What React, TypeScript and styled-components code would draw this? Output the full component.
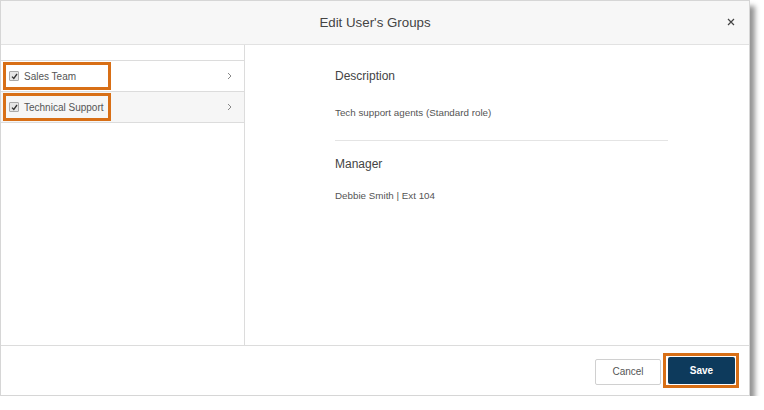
import React from 'react'
import styled, { createGlobalStyle } from 'styled-components'

const GlobalStyle = createGlobalStyle`
    html, body {
        margin: 0;
        padding: 0;
        background: #ffffff;
    }
    body {
        font-family: "Liberation Sans", Arial, sans-serif;
        color: #555;
    }
`

const Dialog = styled.div`
    width: 750px;
    height: 396px;
    box-sizing: border-box;
    border: 1px solid #d6d6d6;
    background: #fff;
    display: flex;
    flex-direction: column;
    box-shadow: 5px 6px 5px rgba(0, 0, 0, 0.42);
`

const Header = styled.div`
    height: 43px;
    flex-shrink: 0;
    background: #f7f7f7;
    border-bottom: 1px solid #e2e2e2;
    display: flex;
    align-items: center;
    justify-content: center;
    position: relative;
`

const Title = styled.div`
    font-size: 13.3px;
    color: #444;
`

const CloseButton = styled.button`
    position: absolute;
    right: 10px;
    top: 13px;
    width: 16px;
    height: 16px;
    background: none;
    border: none;
    padding: 0;
    display: flex;
    align-items: center;
    justify-content: center;
    cursor: pointer;
`

const Body = styled.div`
    flex: 1;
    display: flex;
    min-height: 0;
`

const Sidebar = styled.div`
    width: 243px;
    border-right: 1px solid #dcdcdc;
    padding-top: 15px;
`

const GroupList = styled.div`
    border-top: 1px solid #dcdcdc;
`

const GroupRow = styled.div<{ $shaded?: boolean }>`
    height: 30px;
    border-bottom: 1px solid #dcdcdc;
    background: ${p => (p.$shaded ? '#f6f6f6' : '#fff')};
    display: flex;
    align-items: center;
    padding: 0 12px 0 2px;
`

const Highlight = styled.div`
    width: 108px;
    height: 28px;
    box-sizing: border-box;
    border: 3px solid #d86f16;
    display: flex;
    align-items: center;
    padding: 0 4px 0 3px;
    gap: 5px;
`

const CheckBox = styled.span`
    width: 8px;
    height: 8px;
    border: 1px solid #aaa;
    border-radius: 1px;
    background: #e6e6e6;
    display: flex;
    align-items: center;
    justify-content: center;
`

const GroupName = styled.span`
    font-size: 10px;
    color: #555;
`

const Chevron = styled.span`
    margin-left: auto;
    display: flex;
`

const Details = styled.div`
    flex: 1;
    padding: 24px 0 0 90px;
`

const Heading = styled.div<{ $gap: number }>`
    font-size: 12px;
    line-height: 14px;
    color: #444;
    margin-bottom: ${p => p.$gap}px;
`

const Text = styled.div`
    font-size: 9.8px;
    line-height: 12px;
    color: #555;
`

const Divider = styled.div`
    width: 333px;
    height: 1px;
    background: #e4e4e4;
    margin: 21px 0 16px;
`

const Footer = styled.div`
    height: 49px;
    flex-shrink: 0;
    border-top: 1px solid #dcdcdc;
    display: flex;
    align-items: center;
    justify-content: flex-end;
    padding-right: 10px;
    gap: 2px;
`

const CancelButton = styled.button`
    width: 66px;
    height: 26px;
    border: 1px solid #d0d0d0;
    background: #fff;
    font-family: inherit;
    font-size: 10px;
    color: #555;
    border-radius: 2px;
    cursor: pointer;
    margin-top: 2px;
`

const SaveOutline = styled.div`
    border: 3px solid #d86f16;
    padding: 1px 1px 1px 2px;
    display: flex;
`

const SaveButton = styled.button`
    width: 67px;
    height: 27px;
    border: none;
    background: #0d3a5c;
    color: #fff;
    font-family: inherit;
    font-size: 10px;
    font-weight: bold;
    border-radius: 2px;
    cursor: pointer;
`

const groups = [
    { name: 'Sales Team', shaded: false },
    { name: 'Technical Support', shaded: true },
]

export default function App() {
    return (
        <>
            <GlobalStyle />
            <Dialog>
                <Header>
                    <Title>Edit User's Groups</Title>
                    <CloseButton aria-label="Close">
                        <svg width="8" height="8" viewBox="0 0 8 8">
                            <path d="M1 1 L7 7 M7 1 L1 7" stroke="#444" strokeWidth="1.2" />
                        </svg>
                    </CloseButton>
                </Header>
                <Body>
                    <Sidebar>
                        <GroupList>
                            {groups.map(g => (
                                <GroupRow key={g.name} $shaded={g.shaded}>
                                    <Highlight>
                                        <CheckBox>
                                            <svg width="7" height="7" viewBox="0 0 7 7">
                                                <path d="M1 3.6 L2.8 5.5 L6 1" stroke="#333" strokeWidth="1.3" fill="none" />
                                            </svg>
                                        </CheckBox>
                                        <GroupName>{g.name}</GroupName>
                                    </Highlight>
                                    <Chevron>
                                        <svg width="5" height="8" viewBox="0 0 5 8">
                                            <path d="M1 1 L4 4 L1 7" stroke="#888" strokeWidth="1" fill="none" />
                                        </svg>
                                    </Chevron>
                                </GroupRow>
                            ))}
                        </GroupList>
                    </Sidebar>
                    <Details>
                        <Heading $gap={24}>Description</Heading>
                        <Text>Tech support agents (Standard role)</Text>
                        <Divider />
                        <Heading $gap={19}>Manager</Heading>
                        <Text>Debbie Smith | Ext 104</Text>
                    </Details>
                </Body>
                <Footer>
                    <CancelButton>Cancel</CancelButton>
                    <SaveOutline>
                        <SaveButton>Save</SaveButton>
                    </SaveOutline>
                </Footer>
            </Dialog>
        </>
    )
}
